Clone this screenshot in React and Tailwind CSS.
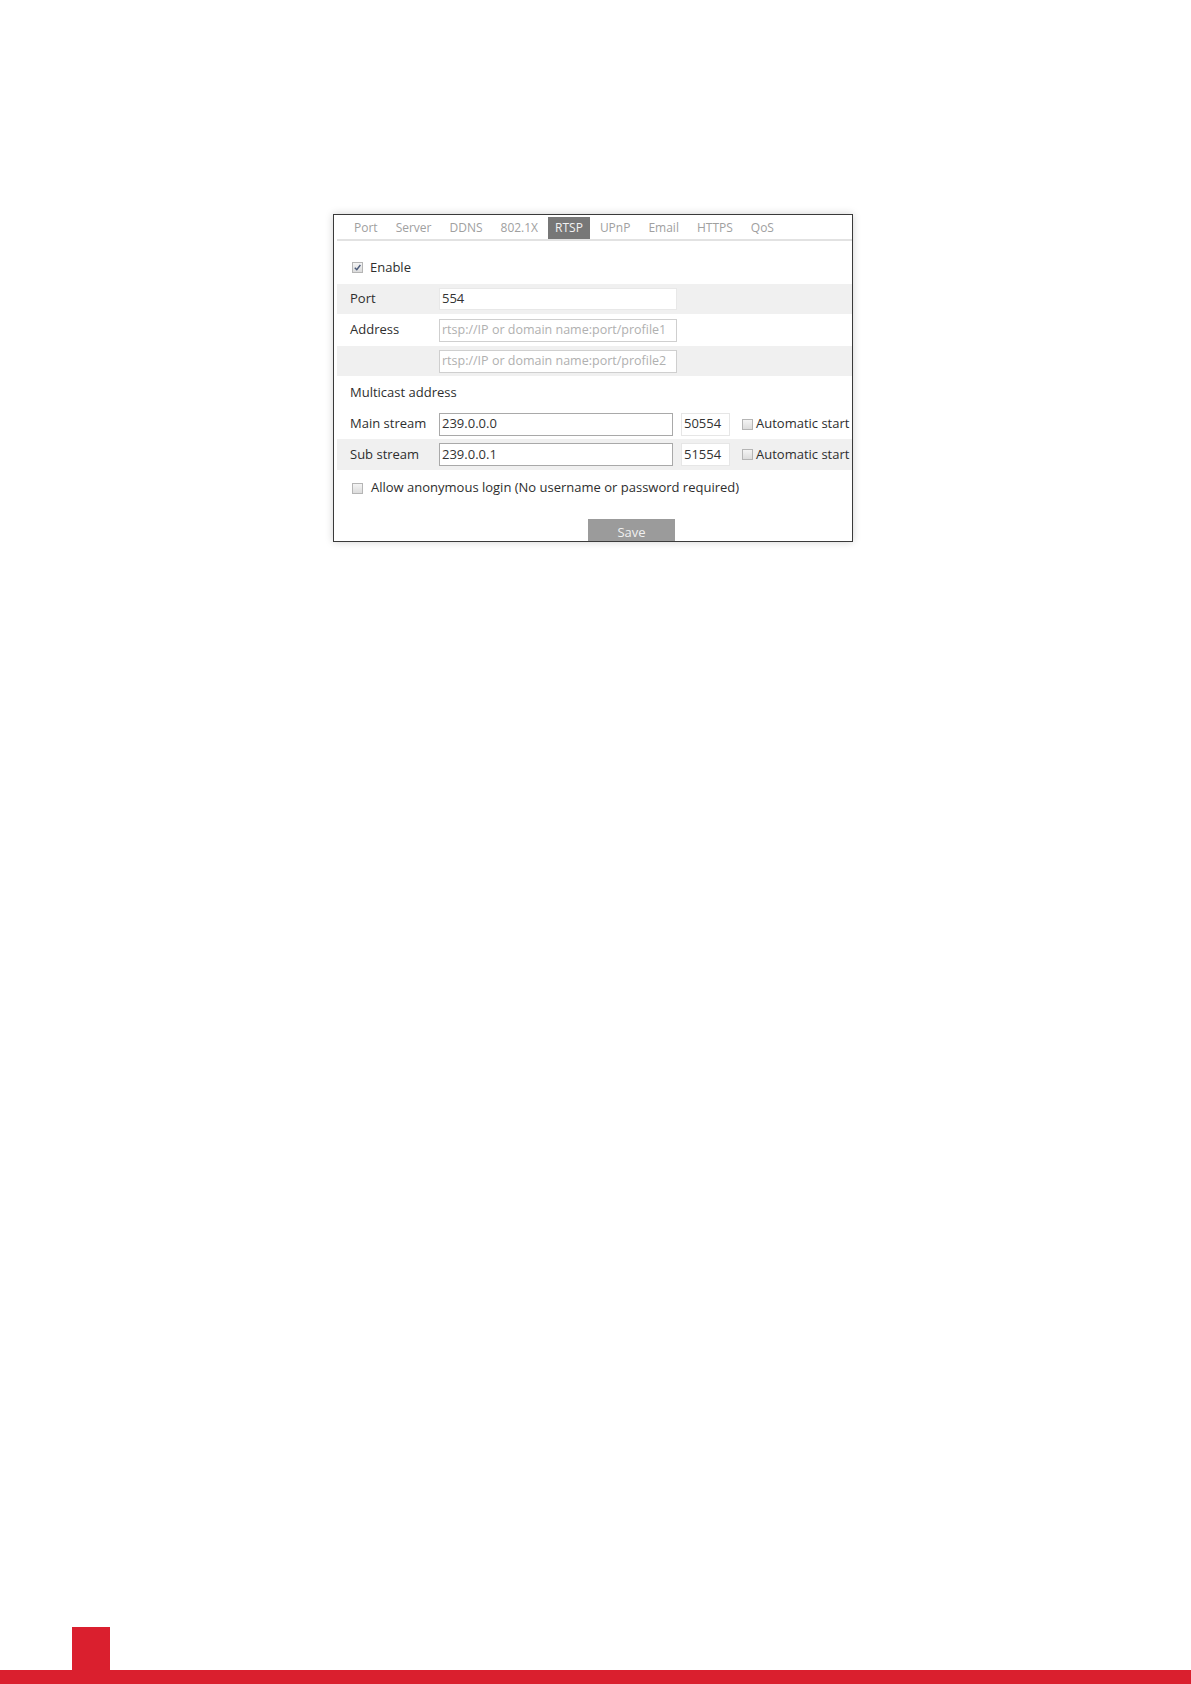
const tabs = ["Port", "Server", "DDNS", "802.1X", "RTSP", "UPnP", "Email", "HTTPS", "QoS"];

function Box({ checked }) {
  return (
    <span className="inline-flex h-[11px] w-[11px] shrink-0 items-center justify-center border border-[#b5b5b5] bg-gradient-to-b from-[#f4f4f4] to-[#dcdcdc]">
      {checked && (
        <svg viewBox="0 0 10 10" className="h-[9px] w-[9px]">
          <path d="M2 5.2 L4.2 7.5 L8.2 2.2" fill="none" stroke="#4a5a7a" strokeWidth="1.6" />
        </svg>
      )}
    </span>
  );
}

function Field({ value, placeholder, className = "" }) {
  return (
    <div className={"flex items-center bg-white pl-[2px] " + className}>
      {value ? (
        <span className="text-[#333]">{value}</span>
      ) : (
        <span className="text-[#b0b0b0]">{placeholder}</span>
      )}
    </div>
  );
}

function StreamRow({ label, ip, port, gray }) {
  return (
    <div className={"flex items-center " + (gray ? "h-[31px] bg-[#f0f0f0]" : "h-[30px]")}>
      <span className="w-[102px] pl-[13px] text-[#2e2e2e]">{label}</span>
      <Field value={ip} className="h-[23px] w-[234px] border border-[#a9a9a9]" />
      <Field value={port} className="ml-[8px] h-[23px] w-[49px] border border-[#e6e6e6]" />
      <span className="ml-[12px] flex items-center gap-[3px] text-[#2e2e2e]">
        <Box />
        Automatic start
      </span>
    </div>
  );
}

export default function App() {
  return (
    <div className="flex h-[1684px] w-[1191px] flex-col bg-white font-['Open_Sans',sans-serif] text-[12px]">
      <div className="ml-[333px] mt-[214px] h-[328px] w-[520px] overflow-hidden border border-[#3a3a3a] bg-white shadow-[0_0_8px_rgba(0,0,0,0.18)]">
        <div className="ml-[3px] flex h-[26px] items-end border-b-2 border-[#e2e2e2] pl-[8px]">
          {tabs.map((t) =>
            t === "RTSP" ? (
              <span key={t} className="mx-[1px] flex h-[22px] items-center bg-[#777] px-[7px] text-[#f2f2f2]">
                {t}
              </span>
            ) : (
              <span key={t} className="flex h-[22px] items-center px-[9px] text-[#a0a0a0]">
                {t}
              </span>
            )
          )}
        </div>

        <div className="pl-[3px] text-[13px]">
          <div className="flex h-[43px] items-center gap-[7px] pl-[15px] pt-[10px] text-[#2e2e2e]">
            <Box checked />
            <span>Enable</span>
          </div>

          <div className="flex h-[30px] items-center bg-[#f0f0f0]">
            <span className="w-[102px] pl-[13px] text-[#2e2e2e]">Port</span>
            <Field value="554" className="h-[22px] w-[238px] border border-[#e8e8e8]" />
          </div>

          <div className="flex h-[32px] items-center">
            <span className="w-[102px] pl-[13px] text-[#2e2e2e]">Address</span>
            <Field placeholder="rtsp://IP or domain name:port/profile1" className="h-[23px] w-[238px] border border-[#cfcfcf] text-[12.5px]" />
          </div>

          <div className="flex h-[30px] items-center bg-[#f0f0f0]">
            <span className="w-[102px]" />
            <Field placeholder="rtsp://IP or domain name:port/profile2" className="h-[23px] w-[238px] border border-[#cfcfcf] text-[12.5px]" />
          </div>

          <div className="flex h-[33px] items-center pl-[13px] text-[#2e2e2e]">Multicast address</div>

          <StreamRow label="Main stream" ip="239.0.0.0" port="50554" />
          <StreamRow label="Sub stream" ip="239.0.0.1" port="51554" gray />

          <div className="flex h-[36px] items-center gap-[8px] pl-[15px] text-[#2e2e2e]">
            <Box />
            <span>Allow anonymous login (No username or password required)</span>
          </div>

          <div className="mt-[13px] flex pl-[251px]">
            <span className="flex h-[28px] w-[87px] items-center justify-center bg-[#9b9b9b] text-[#f0f0f0]">Save</span>
          </div>
        </div>
      </div>

      <div className="mt-auto">
        <div className="ml-[72px] h-[43px] w-[38px] bg-[#da1f2e]" />
        <div className="h-[14px] w-full bg-[#da1f2e]" />
      </div>
    </div>
  );
}
